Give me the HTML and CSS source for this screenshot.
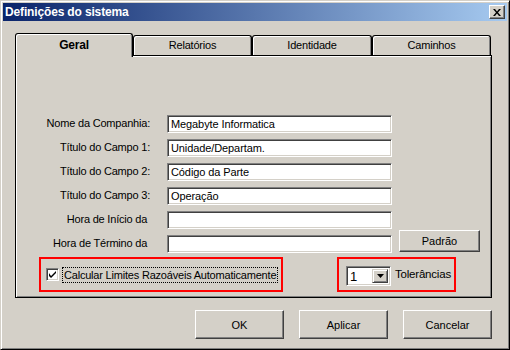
FILE: index.html
```html
<!DOCTYPE html>
<html>
<head>
<title>Definições do sistema</title>
<link rel="stylesheet" href="styles.css">
</head>
<body>

  <div class="window">
    <div class="titlebar">
      <span class="title">Definições do sistema</span>
      <button class="close" aria-label="Fechar">
        <svg width="8" height="7" viewBox="0 0 8 7">
          <path d="M0 0h2l2 2.5 2-2.5h2l-3 3.5 3 3.5h-2l-2-2.5-2 2.5h-2l3-3.5z" fill="#000"/>
        </svg>
      </button>
    </div>

    <div class="tabs">
      <div class="tab active">Geral</div>
      <div class="tab">Relatórios</div>
      <div class="tab wide">Identidade</div>
      <div class="tab">Caminhos</div>
    </div>

    <div class="panel">
      <div class="fields">
        <label>Nome da Companhia:</label>
        <div class="field">Megabyte Informatica</div>
        <span></span>

        <label>Título do Campo 1:</label>
        <div class="field">Unidade/Departam.</div>
        <span></span>

        <label>Título do Campo 2:</label>
        <div class="field">Código da Parte</div>
        <span></span>

        <label>Título do Campo 3:</label>
        <div class="field">Operação</div>
        <span></span>

        <label>Hora de Início da&nbsp;</label>
        <div class="field"></div>
        <span></span>

        <label>Hora de Término da&nbsp;</label>
        <div class="field"></div>
        <button class="btn padrao">Padrão</button>
      </div>

      <div class="options">
        <div class="marked auto">
          <span class="checkbox">
            <svg width="7" height="7" viewBox="0 0 7 7">
              <path d="M0 2v3l2 2 5-5v-2l-5 5z" fill="#000"/>
            </svg>
          </span>
          <span class="focus">Calcular Limites Razoáveis Automaticamente</span>
        </div>

        <div class="marked tol">
          <div class="combo">
            <span class="combo-value">1</span>
            <span class="combo-btn">
              <svg width="7" height="4" viewBox="0 0 7 4">
                <path d="M0 0h7l-3.5 4z" fill="#000"/>
              </svg>
            </span>
          </div>
          <span class="tol-label">Tolerâncias</span>
        </div>
      </div>
    </div>

    <div class="actions">
      <button class="btn">OK</button>
      <button class="btn">Aplicar</button>
      <button class="btn">Cancelar</button>
    </div>
  </div>

</body>
</html>
```

FILE: styles.css
```css
body {
  margin: 0;
  padding: 0;
  font-family: "Liberation Sans", Arial, sans-serif;
  font-size: 11px;
  color: #000;
  background: #D4D0C8;
}

.window {
  width: 510px;
  height: 350px;
  box-sizing: border-box;
  padding: 2px;
  background: #D4D0C8;
  border: 1px solid;
  border-color: #D4D0C8 #000 #000 #D4D0C8;
  box-shadow: inset 1px 1px #fff, inset -1px -1px #808080;
}

/* Title bar */
.titlebar {
  height: 18px;
  display: flex;
  align-items: center;
  justify-content: space-between;
  padding: 0 2px;
  background: linear-gradient(to right, #0A246A, #A6CAF0);
}

.title {
  color: #fff;
  font-weight: bold;
  font-size: 12px;
  letter-spacing: -0.15px;
}

.close {
  width: 16px;
  height: 14px;
  padding: 0;
  display: flex;
  align-items: center;
  justify-content: center;
  background: #D4D0C8;
  border: 1px solid;
  border-color: #fff #404040 #404040 #fff;
  box-shadow: inset -1px -1px #808080;
}

/* Tabs */
.tabs {
  display: flex;
  align-items: flex-end;
  margin: 12px 0 0 12px;
}

.tab {
  width: 119px;
  height: 20px;
  box-sizing: border-box;
  border: 1px solid #000;
  border-bottom: none;
  border-radius: 3px 3px 0 0;
  box-shadow: inset 1px 1px #fff, inset -1px 0 #808080;
  text-align: center;
  line-height: 19px;
  letter-spacing: -0.2px;
}

.tab.wide {
  width: 120px;
}

.tab.active {
  width: 118px;
  height: 24px;
  margin-bottom: -2px;
  position: relative;
  z-index: 2;
  background: #D4D0C8;
  font-weight: bold;
  font-size: 12px;
  line-height: 22px;
}

/* Page */
.panel {
  width: 477px;
  height: 243px;
  box-sizing: border-box;
  margin-left: 12px;
  padding-top: 59px;
  border: 1px solid #000;
  box-shadow: inset 1px 1px #fff, inset -1px -1px #808080;
}

.fields {
  display: grid;
  grid-template-columns: 134px 225px 88px;
  grid-auto-rows: 18px;
  column-gap: 17px;
  row-gap: 6px;
}

.fields label {
  text-align: right;
  line-height: 17px;
  letter-spacing: -0.2px;
  white-space: nowrap;
}

.field {
  box-sizing: border-box;
  height: 18px;
  padding: 0 3px;
  background: #fff;
  border: 1px solid;
  border-color: #808080 #fff #fff #808080;
  box-shadow: inset 1px 1px #404040, inset -1px -1px #D4D0C8;
  line-height: 16px;
  letter-spacing: -0.1px;
  white-space: nowrap;
  overflow: hidden;
}

.btn {
  box-sizing: border-box;
  width: 89px;
  height: 29px;
  padding: 0;
  font-family: inherit;
  font-size: 11px;
  color: #000;
  background: #D4D0C8;
  border: 1px solid;
  border-color: #fff #404040 #404040 #fff;
  box-shadow: inset -1px -1px #808080;
}

.btn.padrao {
  width: 81px;
  height: 22px;
  margin-left: -10px;
  margin-top: -5px;
}

/* Bottom options */
.options {
  display: flex;
  margin-top: 4px;
}

.marked {
  height: 35px;
  box-sizing: border-box;
  border: 2px solid #f00;
  display: flex;
  align-items: center;
}

.auto {
  width: 244px;
  margin-left: 23px;
  padding-left: 5px;
}

.checkbox {
  width: 13px;
  height: 13px;
  box-sizing: border-box;
  display: flex;
  align-items: center;
  justify-content: center;
  background: #fff;
  border: 1px solid;
  border-color: #808080 #fff #fff #808080;
  box-shadow: inset 1px 1px #404040, inset -1px -1px #D4D0C8;
}

.focus {
  margin-left: 3px;
  padding: 0 1px;
  border: 1px dotted #000;
  line-height: 14px;
  letter-spacing: -0.2px;
  white-space: nowrap;
}

.tol {
  width: 119px;
  margin-left: 54px;
  padding-left: 7px;
}

.combo {
  width: 45px;
  height: 20px;
  margin-top: 3px;
  box-sizing: border-box;
  display: flex;
  background: #fff;
  border: 1px solid;
  border-color: #808080 #fff #fff #808080;
  box-shadow: inset 1px 1px #404040, inset -1px -1px #D4D0C8;
  padding: 2px;
}

.combo-value {
  flex: 1;
  font-size: 13px;
  line-height: 16px;
  padding-left: 1px;
}

.combo-btn {
  width: 16px;
  box-sizing: border-box;
  display: flex;
  align-items: center;
  justify-content: center;
  background: #D4D0C8;
  border: 1px solid;
  border-color: #D4D0C8 #404040 #404040 #D4D0C8;
  box-shadow: inset 1px 1px #fff, inset -1px -1px #808080;
}

.tol-label {
  margin-left: 4px;
  margin-top: -2px;
  font-size: 11.5px;
  letter-spacing: -0.2px;
}

/* Dialog buttons */
.actions {
  display: flex;
  justify-content: flex-end;
  gap: 15px;
  margin-top: 12px;
  padding-right: 15px;
}
```
